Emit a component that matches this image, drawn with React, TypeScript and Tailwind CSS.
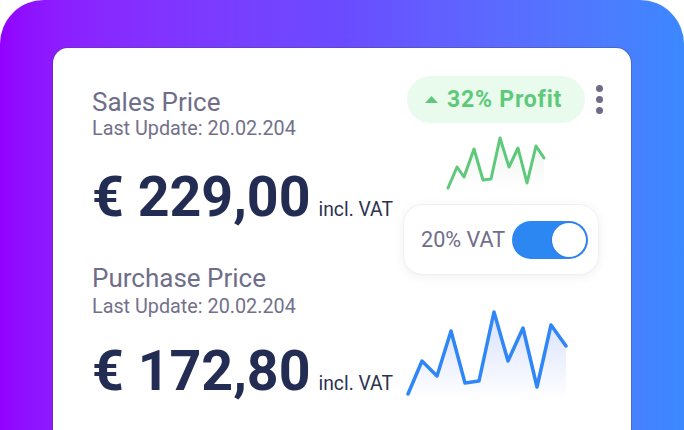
import React from "react";

const greenPts: [number, number][] = [
  [45, 58], [54, 37], [61, 47], [71, 19], [80, 50], [88, 49],
  [97, 8], [106, 37], [115, 18], [124, 53], [133, 16], [141, 28],
];

const bluePts: [number, number][] = [
  [5, 94], [19, 61], [34, 76], [48, 31], [62, 83], [76, 81],
  [91, 12], [105, 61], [120, 28], [134, 87], [148, 25], [163, 46],
];

const toLine = (pts: [number, number][]) => pts.map((p) => p.join(",")).join(" ");
const toArea = (pts: [number, number][], base: number) =>
  `M${pts[0][0]},${base} L${pts.map((p) => p.join(",")).join(" L")} L${pts[pts.length - 1][0]},${base} Z`;

function PriceBlock({
  title,
  amount,
  className,
  subClass,
  priceClass,
}: {
  title: string;
  amount: string;
  className?: string;
  subClass: string;
  priceClass: string;
}) {
  return (
    <div className={className}>
      <div className="text-[26px] leading-[30px] text-[#6f6e8a]">{title}</div>
      <div className={`${subClass} text-[19.8px] leading-[22px] text-[#72718b]`}>Last Update: 20.02.204</div>
      <div className={`${priceClass} flex items-baseline whitespace-nowrap`}>
        <span className="text-[55.5px] leading-[60px] font-bold text-[#232c52]">{amount}</span>
        <span className="ml-[8px] text-[19.3px] text-[#2c3150]">incl. VAT</span>
      </div>
    </div>
  );
}

export default function App() {
  return (
    <div className="w-[684px] h-[430px] bg-white overflow-hidden" style={{ fontFamily: "Roboto, 'Liberation Sans', sans-serif" }}>
      <div className="h-[430px] rounded-t-[44px] bg-gradient-to-r from-[#9200ff] via-[#6a4bff] to-[#3b88ff] overflow-hidden pt-[48px] pl-[53px]">
        <div className="w-[578px] h-[420px] bg-white rounded-t-[15px] shadow-[0_0_0_1px_rgba(70,70,100,0.35)] flex">
          {/* price column */}
          <div className="w-[350px] pl-[39px] pt-[39px]">
            <PriceBlock title="Sales Price" amount="€ 229,00" subClass="mt-[1px]" priceClass="mt-[28px]" />
            <PriceBlock
              title="Purchase Price"
              amount="€ 172,80"
              className="mt-[35px]"
              subClass="mt-[3px]"
              priceClass="mt-[24px]"
            />
          </div>

          {/* widgets column */}
          <div className="w-[228px] pt-[28px]">
            <div className="flex items-center">
              <div className="ml-[4px] w-[178px] h-[47px] rounded-full bg-[#e9fbec] flex items-center pl-[18px]">
                <svg width="13" height="7" viewBox="0 0 13 7" className="mr-[9px]">
                  <polygon points="6.5,0 13,7 0,7" fill="#5ec97a" />
                </svg>
                <span className="text-[23px] tracking-[0.8px] font-bold text-[#5ec97a] leading-none">32% Profit</span>
              </div>
              <div className="ml-[11px] flex flex-col gap-[4px]">
                <span className="block w-[7px] h-[7px] rounded-full bg-[#6e6c86]" />
                <span className="block w-[7px] h-[7px] rounded-full bg-[#6e6c86]" />
                <span className="block w-[7px] h-[7px] rounded-full bg-[#6e6c86]" />
              </div>
            </div>

            <svg width="228" height="65" viewBox="0 0 228 65" className="block mt-[7px]">
              <defs>
                <linearGradient id="gfill" x1="0" y1="0" x2="0" y2="1">
                  <stop offset="0" stopColor="#eef3ef" />
                  <stop offset="1" stopColor="#ffffff" stopOpacity="0.9" />
                </linearGradient>
              </defs>
              <path d={toArea(greenPts, 62)} fill="url(#gfill)" />
              <polyline points={toLine(greenPts)} fill="none" stroke="#5ec97a" strokeWidth="3" strokeLinejoin="round" strokeLinecap="round" />
            </svg>

            <div className="mt-[9px] w-[196px] h-[71px] rounded-[20px] bg-white border border-[#f1f1f4] shadow-[0_2px_10px_rgba(60,60,90,0.08)] flex items-center pl-[17px]">
              <span className="text-[21.6px] text-[#6f6e8a] leading-none">20% VAT</span>
              <div className="ml-[7px] w-[76px] h-[38px] rounded-full bg-[#2d87f3] flex items-center justify-end pr-[2px]">
                <div className="w-[34px] h-[34px] rounded-full bg-white shadow-[0_0_0_1px_rgba(40,100,200,0.25)]" />
              </div>
            </div>

            <svg width="228" height="110" viewBox="0 0 228 110" className="block mt-[25px]">
              <defs>
                <linearGradient id="bfill" x1="0" y1="0" x2="0" y2="1">
                  <stop offset="0" stopColor="#d7e0fd" />
                  <stop offset="1" stopColor="#ffffff" />
                </linearGradient>
              </defs>
              <path d={toArea(bluePts, 100)} fill="url(#bfill)" />
              <polyline points={toLine(bluePts)} fill="none" stroke="#2f86f6" strokeWidth="3.5" strokeLinejoin="round" strokeLinecap="round" />
            </svg>
          </div>
        </div>
      </div>
    </div>
  );
}
